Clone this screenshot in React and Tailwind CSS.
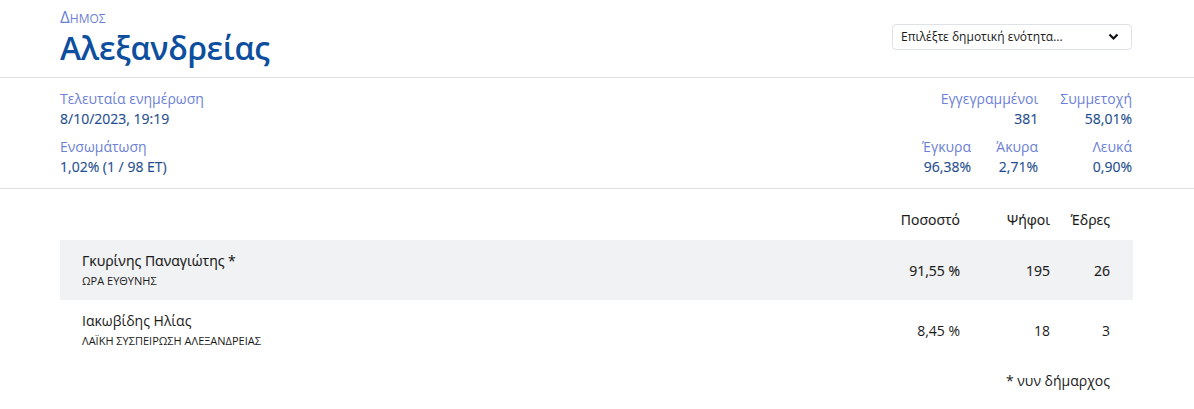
import React from "react";

const rows = [
  { name: "Γκυρίνης Παναγιώτης *", party: "ΩΡΑ ΕΥΘΥΝΗΣ", pct: "91,55 %", votes: "195", seats: "26", top: true },
  { name: "Ιακωβίδης Ηλίας", party: "ΛΑΪΚΗ ΣΥΣΠΕΙΡΩΣΗ ΑΛΕΞΑΝΔΡΕΙΑΣ", pct: "8,45 %", votes: "18", seats: "3" },
];

// medium weight look (font has only regular / semibold)
const medium = "[-webkit-text-stroke:0.15px]";

const Stat = ({ label, value, className = "" }) => (
  <div className={"text-right " + className}>
    <div className="text-[14px] leading-[20px] text-[#6d7fd6]">{label}</div>
    <div className={"text-[14px] leading-[20px] text-[#1f4e8f] " + medium}>{value}</div>
  </div>
);

export default function App() {
  return (
    <div className="min-h-screen bg-white" style={{ fontFamily: "'Open Sans', 'Noto Sans', sans-serif" }}>
      {/* header */}
      <div className="flex items-start justify-between pl-[60px] pr-[62px] h-[78px] border-b border-[#dde1e6]">
        <div className="pt-[7px]">
          <div className="text-[17px] leading-[20px] text-[#6d7fd6]" style={{ fontVariant: "small-caps" }}>
            Δημος
          </div>
          <h1 className="text-[32px] leading-[42px] font-semibold text-[#0d4f9e] tracking-[-0.3px]">Αλεξανδρείας</h1>
        </div>
        <div className="pt-[24px]">
          <div className="w-[240px] h-[26px] border border-[#dee2e6] rounded-[4px] flex items-center justify-between pl-[8px] pr-[12px] text-[12px] text-[#1a1a1a]">
            <span>Επιλέξτε δημοτική ενότητα...</span>
            <svg width="11" height="8" viewBox="0 0 11 8" fill="none">
              <path d="M1.5 1.5 L5.5 5.5 L9.5 1.5" stroke="#111" strokeWidth="2.2" />
            </svg>
          </div>
        </div>
      </div>

      {/* stats */}
      <div className="flex justify-between pl-[60px] pr-[62px] pt-[11px] h-[111px] border-b border-[#dde1e6]">
        <div className="flex flex-col gap-[8px]">
          <div>
            <div className="text-[14px] leading-[20px] text-[#6d7fd6]">Τελευταία ενημέρωση</div>
            <div className={"text-[14px] leading-[20px] text-[#1f4e8f] " + medium}>8/10/2023, 19:19</div>
          </div>
          <div>
            <div className="text-[14px] leading-[20px] text-[#6d7fd6]">Ενσωμάτωση</div>
            <div className={"text-[14px] leading-[20px] text-[#1f4e8f] " + medium}>1,02% (1 / 98 ΕΤ)</div>
          </div>
        </div>
        <div className="flex flex-col gap-[8px]">
          <div className="flex justify-end gap-[22px]">
            <Stat label="Εγγεγραμμένοι" value="381" />
            <Stat label="Συμμετοχή" value="58,01%" />
          </div>
          <div className="flex justify-end">
            <Stat label="Έγκυρα" value="96,38%" />
            <Stat label="Άκυρα" value="2,71%" className="w-[67px]" />
            <Stat label="Λευκά" value="0,90%" className="w-[94px]" />
          </div>
        </div>
      </div>

      {/* results */}
      <div className="pl-[60px] pr-[61px] pt-[20px]">
        <div className={"flex items-center h-[21px] pr-[23px] text-[14px] text-[#1a1a1a] mb-[10px] " + medium}>
          <div className="flex-1" />
          <div className="w-[100px] text-right">Ποσοστό</div>
          <div className="w-[90px] text-right">Ψήφοι</div>
          <div className="w-[60px] text-right">Έδρες</div>
        </div>
        {rows.map((r) => (
          <div
            key={r.name}
            className={
              "flex items-center h-[60px] pl-[22px] pr-[23px] text-[#1a1a1a] " +
              (r.top ? "bg-[#f1f2f4]" : "")
            }
          >
            <div className="flex-1">
              <div className={"text-[14px] leading-[20px] " + (r.top ? medium : "")}>{r.name}</div>
              <div className="text-[11px] leading-[16px] mt-[2px]">{r.party}</div>
            </div>
            <div className={"w-[100px] text-right text-[14px] " + (r.top ? medium : "")}>{r.pct}</div>
            <div className={"w-[90px] text-right text-[14px] " + (r.top ? medium : "")}>{r.votes}</div>
            <div className={"w-[60px] text-right text-[14px] " + (r.top ? medium : "")}>{r.seats}</div>
          </div>
        ))}
        <div className="flex justify-end pr-[23px] pt-[10px] text-[14px] text-[#1a1a1a]">* νυν δήμαρχος</div>
      </div>
    </div>
  );
}
